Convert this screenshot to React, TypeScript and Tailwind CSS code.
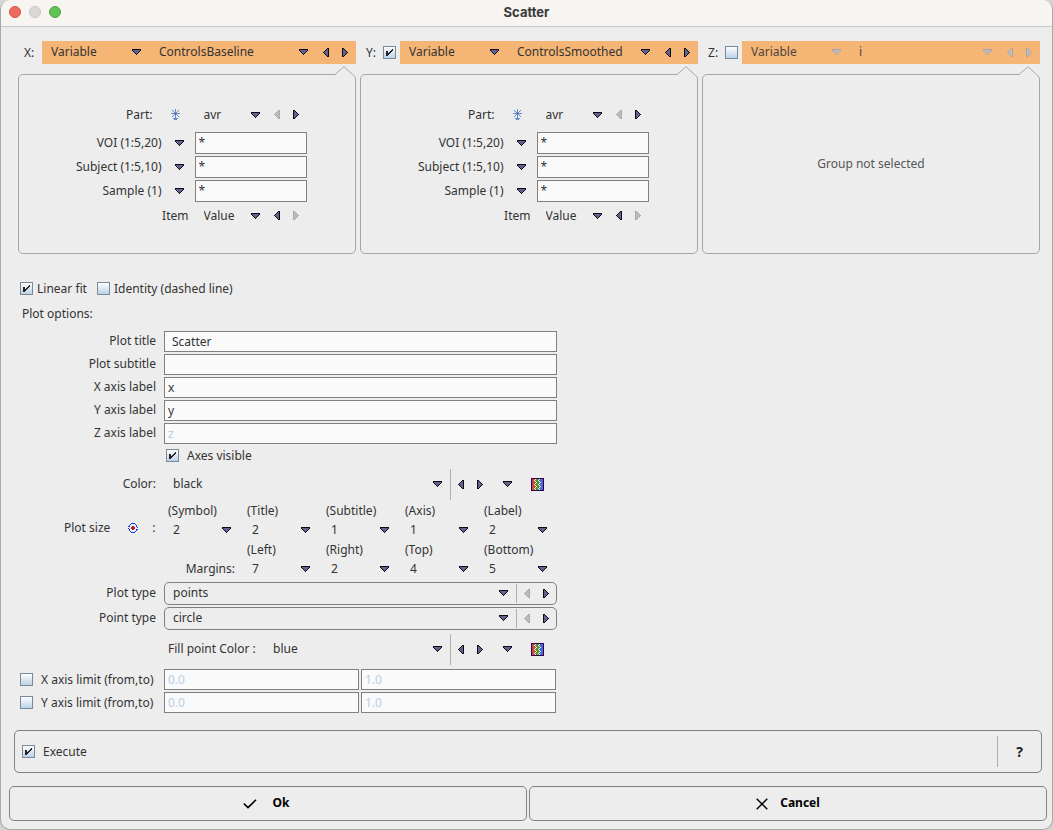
import { useId, type ReactNode } from "react";
import clsx from "clsx";

type IconProps = { disabled?: boolean; className?: string };

function DownArrow({ disabled, className }: IconProps) {
  return (
    <svg
      viewBox="0 0 9 6"
      shapeRendering="crispEdges"
      aria-hidden="true"
      className={clsx("h-[6px] w-[9px] shrink-0", className)}
    >
      <path
        d="M0 0h9v2h-1v1h-1v1h-1v1h-1v1h-1v-1h-1v-1h-1v-1h-1v-1h-1z"
        fill={disabled ? "#a8a8a8" : "#0a0a12"}
      />
      <path d="M1 1h7v1h-1v1h-1v1h-1v1h-1v-1h-1v-1h-1v-1h-1z" fill={disabled ? "#bcbcbc" : "#62628f"} />
    </svg>
  );
}

function SideArrow({ disabled, className }: IconProps) {
  return (
    <svg
      viewBox="0 0 6 9"
      shapeRendering="crispEdges"
      aria-hidden="true"
      className={clsx("h-[9px] w-[6px] shrink-0", className)}
    >
      <path
        d="M6 0v9h-2v-1h-1v-1h-1v-1h-1v-1h-1v-1h1v-1h1v-1h1v-1h1v-1z"
        fill={disabled ? "#a8a8a8" : "#0a0a12"}
      />
      <path
        d="M5 1v7h-1v-1h-1v-1h-1v-1h-1v-1h1v-1h1v-1h1v-1z"
        fill={disabled ? "#bcbcbc" : "#62628f"}
      />
    </svg>
  );
}

function Stepper({ prevOff, nextOff }: { prevOff?: boolean; nextOff?: boolean }) {
  return (
    <div className="flex shrink-0 self-stretch">
      <button type="button" aria-label="Previous" disabled={prevOff} className="flex w-[19px] items-center justify-center">
        <SideArrow disabled={prevOff} />
      </button>
      <button type="button" aria-label="Next" disabled={nextOff} className="flex w-[19px] items-center justify-center">
        <SideArrow disabled={nextOff} className="-scale-x-100" />
      </button>
    </div>
  );
}

type DropdownProps = { label: string; value: string; disabled?: boolean; className?: string; pad?: string };

function Dropdown({ label, value, disabled, className, pad = "pl-[9px]" }: DropdownProps) {
  return (
    <div className={clsx("grid items-center", className)}>
      <select
        aria-label={label}
        disabled={disabled}
        defaultValue={value}
        className={clsx(
          "col-start-1 row-start-1 h-5 w-full appearance-none bg-transparent pr-5 leading-5 opacity-100 outline-none",
          pad,
          disabled && "text-[#4d4640]",
        )}
      >
        <option>{value}</option>
      </select>
      <DownArrow disabled={disabled} className="pointer-events-none col-start-1 row-start-1 mr-2 justify-self-end" />
    </div>
  );
}

type CheckProps = { id?: string; label: string; checked?: boolean };

function Check({ id, label, checked }: CheckProps) {
  return (
    <span className="grid size-[13px] shrink-0">
      <input
        id={id}
        type="checkbox"
        aria-label={id ? undefined : label}
        defaultChecked={checked}
        className="peer col-start-1 row-start-1 size-[13px] appearance-none border border-[#7a8a99] bg-linear-to-b from-[#fdfdfe] to-[#bdd2e7]"
      />
      <svg
        viewBox="0 0 13 13"
        shapeRendering="crispEdges"
        aria-hidden="true"
        className="pointer-events-none invisible col-start-1 row-start-1 size-[13px] peer-checked:visible"
      >
        <path
          d="M3 5h2v2h1v-1h1v-1h1v-1h1v-1h1v2h-1v1h-1v1h-1v1h-1v1h-1v1h-2z"
          fill="#222222"
        />
      </svg>
    </span>
  );
}

function LabeledCheck({ label, checked, gap = "gap-1" }: { label: string; checked?: boolean; gap?: string }) {
  const id = useId();
  return (
    <div className={clsx("flex h-[19px] items-center", gap)}>
      <Check id={id} label={label} checked={checked} />
      <label htmlFor={id}>{label}</label>
    </div>
  );
}

function StarIcon() {
  return (
    <svg viewBox="0 0 11 13" shapeRendering="crispEdges" aria-hidden="true" className="h-[13px] w-[11px]">
      <path
        d="M5 1h1v11h-1zM1 5h9v1h-9zM2 2h1v1h-1zM3 3h1v1h-1zM4 4h1v1h-1zM8 2h1v1h-1zM7 3h1v1h-1zM6 4h1v1h-1zM4 6h1v1h-1zM3 7h1v1h-1zM2 8h1v1h-1zM6 6h1v1h-1zM7 7h1v1h-1zM8 8h1v1h-1zM3 10h5v1h-5zM4 11h3v1h-3z"
        fill="#5f8fc9"
      />
      <path d="M5 5h1v1h-1z" fill="#c03050" />
    </svg>
  );
}

function TargetIcon() {
  return (
    <svg viewBox="0 0 10 10" shapeRendering="crispEdges" aria-hidden="true" className="size-[10px]">
      <path
        d="M3 0h4v1h-4zM2 1h1v1h-1zM7 1h1v1h-1zM1 2h1v2h-1zM8 2h1v2h-1zM0 3h1v1h-1zM9 4h1v1h-1zM0 5h1v1h-1zM9 6h1v1h-1zM1 6h1v2h-1zM8 6h1v2h-1zM2 8h1v1h-1zM7 8h1v1h-1zM3 9h4v1h-4z"
        fill="#1a3cf0"
      />
      <path d="M4 3h2v1h1v2h-1v1h-2v-1h-1v-2h1z" fill="#b82020" />
    </svg>
  );
}

const WAVE = [4, 3, 4, 5, 4, 3, 4, 5, 4, 3, 4];

function PaletteIcon() {
  return (
    <svg viewBox="0 0 13 13" shapeRendering="crispEdges" aria-hidden="true" className="size-[13px]">
      <path d="M0 0h13v13h-13z" fill="#33004f" />
      <path d="M1 1h5v11h-5z" fill="#d04448" />
      <path d="M6 1h6v11h-6z" fill="#4a68dc" />
      {WAVE.map((x, row) => (
        <g key={row}>
          <rect x={x} y={row + 1} width="5" height="1" fill="#f0f4ea" />
          <rect x={x + 1} y={row + 1} width="3" height="1" fill="#4a9a24" />
        </g>
      ))}
    </svg>
  );
}

function GroupColumn({
  axis,
  value,
  checked,
  disabled,
  children,
}: {
  axis: string;
  value: string;
  checked?: boolean;
  disabled?: boolean;
  children: ReactNode;
}) {
  return (
    <section className="min-w-0 flex-1">
      <div className="flex h-[23px] items-center pl-[6px]">
        <span className={checked === undefined ? "w-[18px]" : "w-[17px]"}>{axis}:</span>
        {checked !== undefined && (
          <span className="mr-1 flex">
            <Check label={`Use ${axis}`} checked={checked} />
          </span>
        )}
        <div className="flex h-full min-w-0 flex-1 items-center bg-[#f5b575] pr-[2px]">
          <Dropdown label={`${axis} source`} value="Variable" disabled={disabled} className="w-[107px] shrink-0 pb-[2px]" />
          <Dropdown label={`${axis} variable`} value={value} disabled={disabled} pad="pl-[10px]" className="min-w-0 flex-1 pb-[2px]" />
          <Stepper prevOff={disabled} nextOff={disabled} />
        </div>
      </div>
      <div className="relative mt-[10px] flex h-[180px] items-center justify-center rounded-[5px] border border-[#a6a6a6]">
        <svg
          viewBox="0 0 18 10"
          aria-hidden="true"
          className="absolute -top-[9px] right-[2px] h-[10px] w-[18px]"
        >
          <path d="M0 9L9 0L18 9V10H0Z" fill="#ededed" />
          <path d="M0 8.5L9 0.7L17.5 8.5" fill="none" stroke="#a6a6a6" />
        </svg>
        {children}
      </div>
    </section>
  );
}

function PartForm() {
  const id = useId();
  const ranges = ["VOI (1:5,20)", "Subject (1:5,10)", "Sample (1)"];
  return (
    <div className="w-[239px] pt-[2px]">
      <div className="flex h-5 items-center">
        <span className="w-[85px] text-right">Part:</span>
        <button type="button" aria-label="Part options" className="flex w-[42px] justify-center pl-1">
          <StarIcon />
        </button>
        <Dropdown label="Part" value="avr" className="w-[73px]" />
        <Stepper prevOff />
      </div>
      <div className="mt-[7px] flex flex-col gap-[2px]">
        {ranges.map((r) => (
          <div key={r} className="flex h-[22px] items-center">
            <label htmlFor={id + r} className="w-[94px] text-right whitespace-nowrap">
              {r}
            </label>
            <button type="button" aria-label={`Choose ${r}`} className="flex w-[33px] items-center justify-center self-stretch pl-[2px]">
              <DownArrow />
            </button>
            <input
              id={id + r}
              defaultValue="*"
              className="h-full min-w-0 flex-1 border border-[#808080] bg-[#fafafa] px-[3px] outline-none"
            />
          </div>
        ))}
      </div>
      <div className="mt-1 flex h-5 items-center">
        <span className="mr-[6px] w-[121px] text-right">Item</span>
        <Dropdown label="Item" value="Value" className="w-[73px]" />
        <Stepper nextOff />
      </div>
    </div>
  );
}

function TextRow({ label, value, disabled, pad = "px-[3px]" }: { label: string; value: string; disabled?: boolean; pad?: string }) {
  const id = useId();
  return (
    <div className="flex h-[21px] items-center gap-2">
      <label htmlFor={id} className="w-[136px] shrink-0 pb-px text-right">
        {label}
      </label>
      <input
        id={id}
        defaultValue={value}
        disabled={disabled}
        className={clsx(
          "h-full min-w-0 flex-1 border border-[#808080] bg-[#fafafa] outline-none disabled:text-[#b8cfe5]",
          pad,
        )}
      />
    </div>
  );
}

function ColorTools() {
  return (
    <>
      <span className="w-px shrink-0 self-stretch bg-[#b0b0b0]" />
      <Stepper />
      <button type="button" aria-label="More colors" className="flex w-[36px] items-center justify-center self-stretch pb-px">
        <DownArrow />
      </button>
      <button type="button" aria-label="Pick color" className="mr-[13px] ml-[6px]">
        <PaletteIcon />
      </button>
    </>
  );
}

function SizeCell({ label, value }: { label: string; value: string }) {
  return (
    <div className="w-[79px] shrink-0 pl-1">
      <div className="h-[19px] leading-5">({label})</div>
      <Dropdown label={label} value={value} pad="pl-[5px]" className="h-5 w-[71px]" />
    </div>
  );
}

function TypeRow({ label, value }: { label: string; value: string }) {
  return (
    <div className="flex h-[23px] items-center gap-2">
      <span className="w-[136px] shrink-0 pb-px text-right">{label}</span>
      <div className="flex h-full min-w-0 flex-1 items-center rounded-[5px] border border-[#808080] pr-px">
        <Dropdown label={label} value={value} pad="pl-2" className="min-w-0 flex-1 pb-[2px]" />
        <span className="my-px w-px self-stretch bg-[#b5aeb0]" />
        <Stepper prevOff />
      </div>
    </div>
  );
}

function LimitRow({ label }: { label: string }) {
  return (
    <div className="flex h-[21px] items-center">
      <div className="w-[144px] whitespace-nowrap">
        <LabeledCheck label={label} gap="gap-2" />
      </div>
      <div className="flex h-full min-w-0 flex-1 gap-[2px] pr-px">
        {["0.0", "1.0"].map((v, i) => (
          <input
            key={v}
            aria-label={`${label} ${i === 0 ? "from" : "to"}`}
            defaultValue={v}
            disabled
            className="h-full min-w-0 flex-1 border border-[#808080] bg-[#fafafa] px-[3px] text-[#b8cfe5]"
          />
        ))}
      </div>
    </div>
  );
}

export default function App() {
  return (
    <div className="min-h-screen bg-[#d4d4d4] font-['Noto_Sans',sans-serif] text-[12px] leading-5 text-[#333333]">
      <div className="flex min-h-screen flex-col overflow-hidden rounded-[10px] border-x border-b border-[#a9a9a9] bg-[#ededed]">
        <header className="grid h-[27px] grid-cols-[1fr_auto_1fr] items-center border-b border-[#c9c8c6] bg-[#f6f5f1] pb-[2px]">
          <div className="flex gap-2 pl-2">
            <button type="button" aria-label="Close" className="size-3 rounded-full border border-[#d5544a] bg-[#ec6a5e]" />
            <button type="button" aria-label="Minimize" className="size-3 rounded-full border border-[#c6c5c2] bg-[#dad9d6]" />
            <button type="button" aria-label="Zoom" className="size-3 rounded-full border border-[#50a93f] bg-[#5fc454]" />
          </div>
          <h1 className="font-['Inter',sans-serif] text-[13px] font-bold text-[#3a3a3a]">Scatter</h1>
        </header>

        <main className="flex flex-col pt-[14px]">
          <div className="flex gap-1 pr-3 pl-[17px]">
            <GroupColumn axis="X" value="ControlsBaseline">
              <PartForm />
            </GroupColumn>
            <GroupColumn axis="Y" value="ControlsSmoothed" checked>
              <PartForm />
            </GroupColumn>
            <GroupColumn axis="Z" value="i" checked={false} disabled>
              <p className="text-[#555555]">Group not selected</p>
            </GroupColumn>
          </div>

          <div className="mt-[25px] ml-[19px] w-[537px]">
            <div className="flex gap-[10px]">
              <LabeledCheck label="Linear fit" checked />
              <LabeledCheck label="Identity (dashed line)" />
            </div>
            <h2 className="mt-[6px] pl-[2px]">Plot options:</h2>

            <div className="mt-[7px] flex flex-col gap-[2px]">
              <TextRow label="Plot title" value="Scatter" pad="px-[7px]" />
              <TextRow label="Plot subtitle" value="" />
              <TextRow label="X axis label" value="x" />
              <TextRow label="Y axis label" value="y" />
              <TextRow label="Z axis label" value="z" disabled />
              <div className="pl-[146px]">
                <LabeledCheck label="Axes visible" checked gap="gap-2" />
              </div>
            </div>

            <div className="mt-1 flex h-[31px] items-center">
              <span className="mr-2 w-[136px] pb-px text-right">Color:</span>
              <Dropdown label="Color" value="black" className="min-w-0 flex-1 pb-[2px]" />
              <ColorTools />
            </div>

            <div className="mt-px flex">
              <div className="flex h-[39px] w-[144px] shrink-0 items-end pb-[2px] pl-[44px]">
                <span>Plot size</span>
                <button type="button" aria-label="Reset plot size" className="mr-[14px] ml-[18px] flex h-5 items-center">
                  <TargetIcon />
                </button>
                <span>:</span>
              </div>
              <SizeCell label="Symbol" value="2" />
              <SizeCell label="Title" value="2" />
              <SizeCell label="Subtitle" value="1" />
              <SizeCell label="Axis" value="1" />
              <SizeCell label="Label" value="2" />
            </div>
            <div className="flex items-end">
              <span className="mr-2 h-[19px] w-[215px] shrink-0 pb-px text-right leading-[18px]">Margins:</span>
              <SizeCell label="Left" value="7" />
              <SizeCell label="Right" value="2" />
              <SizeCell label="Top" value="4" />
              <SizeCell label="Bottom" value="5" />
            </div>

            <div className="mt-[3px] flex flex-col gap-[2px]">
              <TypeRow label="Plot type" value="points" />
              <TypeRow label="Point type" value="circle" />
            </div>

            <div className="mt-1 flex h-[31px] items-center">
              <span className="w-[244px] pb-px pl-[148px] whitespace-nowrap">Fill point Color :</span>
              <Dropdown label="Fill point color" value="blue" className="min-w-0 flex-1 pb-[2px]" />
              <ColorTools />
            </div>

            <div className="mt-1 flex flex-col gap-[2px]">
              <LimitRow label="X axis limit (from,to)" />
              <LimitRow label="Y axis limit (from,to)" />
            </div>
          </div>

          <div className="mt-[17px] mr-[10px] ml-[13px] flex h-[43px] items-center rounded-[5px] border border-[#808080] pl-[7px]">
            <LabeledCheck label="Execute" checked gap="gap-2" />
            <span className="my-[5px] ml-auto w-px self-stretch bg-[#b0b0b0]" />
            <button type="button" className="w-[43px] self-stretch text-[14px] font-bold text-[#222222]">
              ?
            </button>
          </div>

          <div className="mt-[13px] mr-[5px] mb-2 ml-2 grid grid-cols-2 gap-[2px] text-black">
            <button
              type="button"
              className="flex h-[35px] items-center justify-center gap-4 rounded-[5px] border border-[#808080] pr-1 pb-[2px] font-bold"
            >
              <svg viewBox="0 0 14 10" aria-hidden="true" className="mt-[3px] h-[10px] w-[14px]">
                <path d="M0.8 4.5L5 8.6L13 0.8" fill="none" stroke="#000" strokeWidth="1.6" />
              </svg>
              Ok
            </button>
            <button
              type="button"
              className="flex h-[35px] items-center justify-center gap-3 rounded-[5px] border border-[#808080] pb-[2px] font-bold"
            >
              <svg viewBox="0 0 12 12" aria-hidden="true" className="mt-[2px] size-3">
                <path d="M0.7 0.7L11.3 11.3M11.3 0.7L0.7 11.3" stroke="#000" strokeWidth="1.4" />
              </svg>
              Cancel
            </button>
          </div>
        </main>
      </div>
    </div>
  );
}
